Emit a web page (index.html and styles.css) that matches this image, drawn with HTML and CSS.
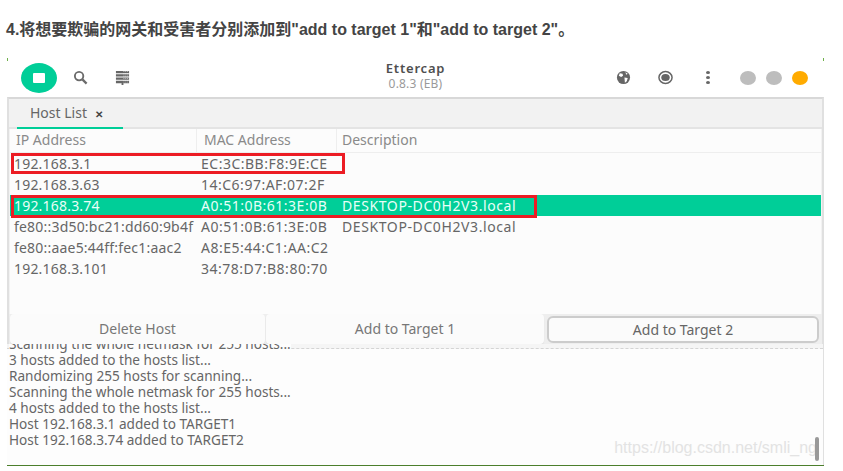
FILE: index.html
```html
<!DOCTYPE html>
<html lang="zh-CN">
<head>
    <meta charset="UTF-8">
    <title>Ettercap</title>
    <link rel="stylesheet" href="styles.css">
</head>
<body>
    <h4 class="step">4.将想要欺骗的网关和受害者分别添加到"add to target 1"和"add to target 2"。</h4>

    <div class="shot">
        <div class="titlebar">
            <div class="tools-left">
                <span class="stop"><i></i></span>
                <svg class="ico search" viewBox="0 0 16 16"><circle cx="6.5" cy="6.5" r="4.5" fill="none" stroke="#6b6b6b" stroke-width="2"/><path d="M10 10l4.500 4.500" stroke="#6b6b6b" stroke-width="2.400"/></svg>
                <svg class="ico hosts" viewBox="0 0 16 16"><path d="M1 1h14v2.500H1zM1 4.500h14V7H1zM1 8h14v2.500H1zM1 11.500h14V14H9v2H7v-2H1z" fill="#666"/><path d="M9.500 1v13M11.500 1v13M13.500 1v13" stroke="#fff" stroke-width=".7" stroke-dasharray="1 1.500"/></svg>
            </div>
            <div class="title">
                <b>Ettercap</b>
                <span>0.8.3 (EB)</span>
            </div>
            <div class="tools-right">
                <svg class="ico globe" viewBox="0 0 16 16"><circle cx="8" cy="8" r="7" fill="#666"/><path d="M4 3.500l3 .5 .5 2-2 1.500-2.500-1.500zM9 8l3.500 .5-1 3.500-2 1.500zM10 2.500l2.500 1.500-1.500 1z" fill="#fff"/></svg>
                <svg class="ico record" viewBox="0 0 16 16"><ellipse cx="8" cy="8" rx="7" ry="6.300" fill="none" stroke="#666" stroke-width="1.600"/><ellipse cx="8" cy="8" rx="4.500" ry="3.800" fill="#666"/></svg>
                <span class="dots"><i></i><i></i><i></i></span>
                <span class="win-btns"><i></i><i></i><i class="on"></i></span>
            </div>
        </div>

        <div class="panel">
            <div class="tabs">
                <div class="tab">Host List <span class="close">✕</span></div>
            </div>
            <div class="list">
                <div class="row head">
                    <span class="ip">IP Address</span>
                    <span class="mac">MAC Address</span>
                    <span class="desc">Description</span>
                </div>
                <div class="row"><span class="ip">192.168.3.1</span><span class="mac">EC:3C:BB:F8:9E:CE</span></div>
                <div class="row"><span class="ip">192.168.3.63</span><span class="mac">14:C6:97:AF:07:2F</span></div>
                <div class="row sel"><span class="ip">192.168.3.74</span><span class="mac">A0:51:0B:61:3E:0B</span><span class="desc">DESKTOP-DC0H2V3.local</span></div>
                <div class="row"><span class="ip">fe80::3d50:bc21:dd60:9b4f</span><span class="mac">A0:51:0B:61:3E:0B</span><span class="desc">DESKTOP-DC0H2V3.local</span></div>
                <div class="row"><span class="ip">fe80::aae5:44ff:fec1:aac2</span><span class="mac">A8:E5:44:C1:AA:C2</span></div>
                <div class="row"><span class="ip">192.168.3.101</span><span class="mac">34:78:D7:B8:80:70</span></div>
                <div class="mark mark1"></div>
                <div class="mark mark2"></div>
            </div>
            <div class="actions">
                <button class="btn btn-del">Delete Host</button>
                <button class="btn btn-t1">Add to Target 1</button>
                <button class="btn btn-t2">Add to Target 2</button>
            </div>
        </div>

        <div class="log">
            <div class="log-lines">
                <div class="cut">Scanning the whole netmask for 255 hosts...</div>
                <div>3 hosts added to the hosts list...</div>
                <div>Randomizing 255 hosts for scanning...</div>
                <div>Scanning the whole netmask for 255 hosts...</div>
                <div>4 hosts added to the hosts list...</div>
                <div>Host 192.168.3.1 added to TARGET1</div>
                <div>Host 192.168.3.74 added to TARGET2</div>
            </div>
            <span class="watermark">https://blog.csdn.net/smli_ng</span>
            <span class="thumb"></span>
        </div>
    </div>
</body>
</html>
```

FILE: styles.css
```css
/* reset css */
html,body {
    margin: 0;
    padding: 0;
    background: #fff;
}
body {
    height: 471px;
    overflow: hidden;
    font-family: "Noto Sans", "Noto Sans CJK SC", sans-serif;
}
/* heading */
.step {
    margin: 0;
    padding: 20px 0 0 6px;
    height: 38px;
    font: bold 16px/20px "Liberation Sans", "Noto Sans CJK SC", sans-serif;
    color: #444;
}
/* screenshot */
.shot {
    position: relative;
    margin-left: 7px;
    width: 817px;
    height: 407px;
    display: flex;
    flex-direction: column;
    border-bottom: 1px solid #4c7f2c;
}
/* green specks left at the crop corners */
.shot::before,
.shot::after {
    content: '';
    position: absolute;
    top: 0;
    width: 1px;
    height: 3px;
    background: #6fb04a;
}
.shot::before {
    left: 0;
}
.shot::after {
    right: 0;
}
.titlebar {
    height: 39px;
    display: flex;
    align-items: center;
    justify-content: space-between;
    position: relative;
    padding: 0 16px 0 14px;
}
.tools-left,.tools-right {
    display: flex;
    align-items: center;
}
.stop {
    width: 36px;
    height: 30px;
    border-radius: 50%;
    background: #00ce98;
    display: flex;
    align-items: center;
    justify-content: center;
}
.stop i {
    width: 12px;
    height: 10px;
    border-radius: 1px;
    background: #fff;
}
.ico {
    width: 15px;
    height: 15px;
}
.search {
    margin-left: 16px;
}
.hosts {
    margin-left: 27px;
}
.title {
    position: absolute;
    left: 0;
    right: 0;
    top: 3px;
    text-align: center;
    line-height: 15px;
    pointer-events: none;
}
.title b {
    display: block;
    font-size: 13px;
    font-weight: 600;
    letter-spacing: .8px;
    color: #4f4f4f;
}
.title span {
    display: block;
    font-size: 12px;
    letter-spacing: .2px;
    color: #9a9a9a;
}
.globe {
    margin-right: 27px;
}
.record {
    margin-right: 33px;
}
.dots {
    display: flex;
    flex-direction: column;
    gap: 2px;
    margin-right: 30px;
}
.dots i {
    width: 4px;
    height: 3px;
    border-radius: 50%;
    background: #666;
}
.win-btns {
    display: flex;
    gap: 10px;
}
.win-btns i {
    width: 16px;
    height: 14px;
    border-radius: 50%;
    background: #bdbdbd;
}
.win-btns .on {
    background: #ffab00;
}
/* host list panel */
.panel {
    height: 247px;
    background: #f2f2f2;
    border: 2px solid #e0e0e0;
    border-bottom: none;
    border-top-color: #d8d8d8;
    box-sizing: border-box;
    display: flex;
    flex-direction: column;
}
.tabs {
    height: 30px;
    border-bottom: 2px solid #e4e4e4;
    box-sizing: border-box;
    padding-left: 8px;
    flex-shrink: 0;
}
.tab {
    width: 106px;
    height: 30px;
    box-sizing: border-box;
    border-bottom: 2px solid #00ce98;
    padding-left: 13px;
    font-size: 14px;
    line-height: 28px;
    color: #666;
}
.close {
    margin-left: 4px;
    font-size: 10px;
    font-weight: bold;
    color: #444;
}
.list {
    position: relative;
    flex: 1;
    background: #fcfcfc;
    margin: 0 1px;
}
.row {
    display: flex;
    height: 21px;
    line-height: 22px;
    font-size: 14px;
    color: #666;
    white-space: nowrap;
}
.row span {
    padding-left: 4px;
    box-sizing: border-box;
}
.row .ip {
    width: 187px;
    letter-spacing: .2px;
}
.row .mac {
    width: 141px;
    letter-spacing: .5px;
}
.row .desc {
    letter-spacing: .6px;
}
.row.head {
    height: 24px;
    line-height: 22px;
    color: #8a8a8a;
    border-bottom: 1px solid #eee;
    box-sizing: border-box;
}
.head .ip,.head .mac {
    border-right: 1px solid #eee;
    letter-spacing: 0;
}
.head .ip {
    padding-left: 6px;
}
.head .mac {
    width: 140px;
    padding-left: 7px;
    letter-spacing: 0;
}
.head .desc {
    padding-left: 5px;
    letter-spacing: 0;
}
.row.sel {
    background: #00ce98;
    color: #e9fff8;
}
/* red boxes from the screenshot */
.mark {
    position: absolute;
    left: 1px;
    border: 3px solid #ec1c24;
    box-sizing: border-box;
}
.mark1 {
    top: 24px;
    width: 334px;
    height: 21px;
}
.mark2 {
    top: 66px;
    width: 526px;
    height: 23px;
}
.actions {
    height: 30px;
    display: grid;
    grid-template-columns: 255px 278px 1fr;
    gap: 1px;
    padding: 0 1px;
    box-sizing: border-box;
    background: #eee;
    flex-shrink: 0;
}
.btn {
    font: 14px "Noto Sans", sans-serif;
    color: #777;
    background: #fbfbfb;
    border: none;
    border-radius: 4px;
    padding: 0 0 1px;
    height: 30px;
    box-shadow: 0 1px 1px #ddd;
}
.btn-t2 {
    margin: 2px 2px 0;
    height: 27px;
    border: 2px solid #ccc;
    color: #666;
    box-shadow: none;
    border-radius: 6px;
}
/* log */
.log {
    position: relative;
    flex: 1;
    background: #fdfdfd;
    border-right: 1px solid #e0e0e0;
    overflow: hidden;
    font-size: 13.6px;
    line-height: 16px;
    color: #666;
}
/* strip under the buttons, the dashes run on behind the clipped line */
.log::before {
    content: '';
    display: block;
    height: 4px;
    background: #f5f5f5;
    border-bottom: 1px dashed #d4d4d4;
}
.log-lines {
    position: relative;
    margin-top: -13px;
    padding-left: 2px;
    white-space: nowrap;
}
.cut {
    width: fit-content;
    background: #fdfdfd;
}
.watermark {
    position: absolute;
    right: 6px;
    bottom: 8px;
    font: 16px "Liberation Sans", sans-serif;
    color: #e3e3e3;
}
.thumb {
    position: absolute;
    right: 4px;
    bottom: 4px;
    width: 4px;
    height: 24px;
    border-radius: 2px;
    background: #999;
}
```
